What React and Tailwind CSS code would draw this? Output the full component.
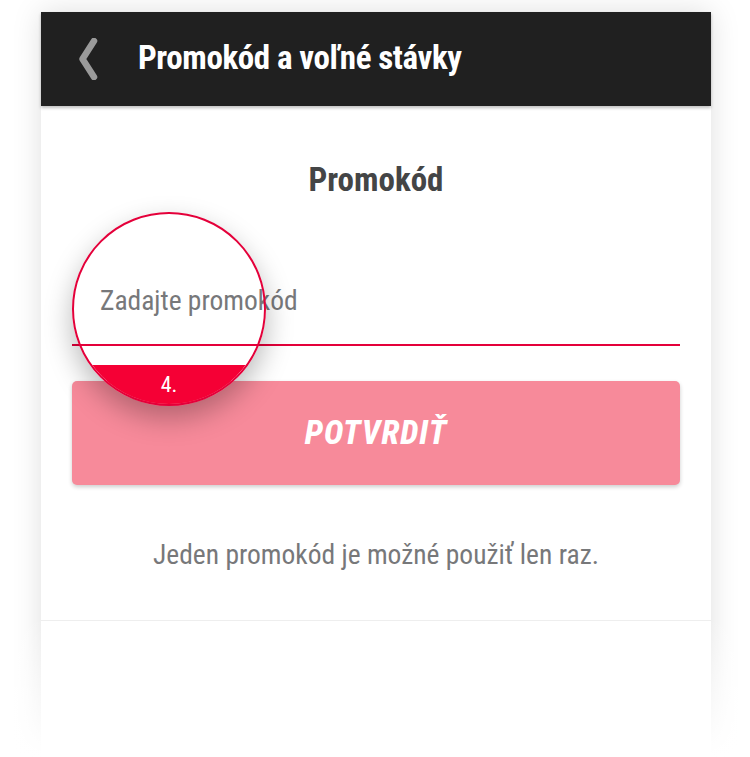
import React from 'react'

const condensed = "font-['Roboto_Condensed','Liberation_Sans_Narrow','DejaVu_Sans_Condensed',Roboto,sans-serif]"

function BackChevron() {
  return (
    <svg className="w-[24px] h-[42px]" viewBox="0 0 24 42" fill="none">
      <path d="M18 3 L6.5 21 L18 39" stroke="#9a9a9a" strokeWidth="6.5" strokeLinecap="round" strokeLinejoin="round" />
    </svg>
  )
}

function Magnifier() {
  return (
    <div className="absolute left-[31px] top-[106px] w-[194px] h-[194px] rounded-full border-2 border-[#e4003a] shadow-[0_12px_28px_rgba(0,0,0,0.28)] overflow-hidden flex flex-col justify-end">
      <div className={`h-[39px] bg-[#f50035] flex items-start justify-center pt-[8px] text-white text-[22px] leading-[24px] ${condensed}`}>
        4.
      </div>
    </div>
  )
}

export default function App() {
  return (
    <div className="relative h-[757px] bg-white overflow-hidden">
      <div className="ml-[41px] w-[670px] mt-[12px] h-[745px] bg-white shadow-[0_0_28px_rgba(0,0,0,0.13)] flex flex-col">
        {/* Header */}
        <header className="h-[94px] bg-[#202020] flex items-center pl-[35px] gap-[38px] shadow-[0_2px_3px_rgba(0,0,0,0.25)] relative z-10">
          <BackChevron />
          <h1 className={`text-white text-[33px] font-bold tracking-[-0.4px] -mt-[3px] ${condensed}`}>Promokód a voľné stávky</h1>
        </header>

        {/* Content */}
        <div className="relative px-[31px] pt-[55px] pb-[49px] border-b border-[#eeeeee]">
          <h2 className={`text-center text-[33px] font-bold text-[#444546] leading-[38px] ${condensed}`}>Promokód</h2>

          <div className="mt-[85px] border-b-2 border-[#e4003a] pb-[27px] pl-[28px]">
            <span className={`text-[27.5px] text-[#77787a] leading-[33px] ${condensed}`}>Zadajte promokód</span>
          </div>

          <button className="mt-[35px] w-full h-[104px] rounded-[5px] bg-[#f78a9a] shadow-[0_2px_4px_rgba(0,0,0,0.2)] flex items-center justify-center">
            <span className={`text-white text-[33px] font-extrabold italic tracking-[1px] ${condensed}`}>POTVRDIŤ</span>
          </button>

          <p className={`mt-[53px] text-center text-[27.5px] text-[#77787a] leading-[33px] ${condensed}`}>Jeden promokód je možné použiť len raz.</p>

          <Magnifier />
        </div>
      </div>
      {/* bottom fade over shadow */}
      <div className="absolute left-0 right-0 bottom-0 h-[140px] bg-gradient-to-b from-transparent to-white pointer-events-none" />
    </div>
  )
}
